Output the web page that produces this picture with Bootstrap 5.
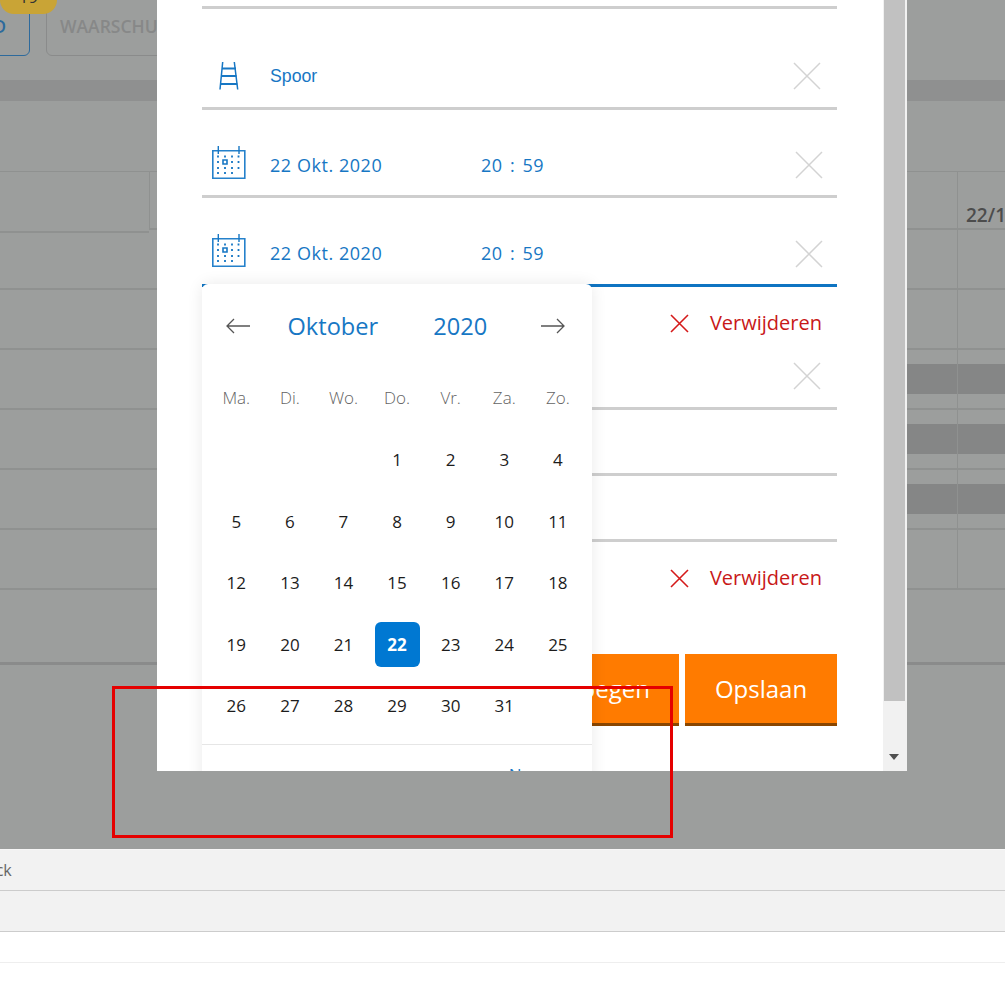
<!DOCTYPE html>
<html lang="nl">
<head>
<meta charset="utf-8">
<title>Datum kiezen</title>
<link href="https://cdn.jsdelivr.net/npm/bootstrap@5.3.0/dist/css/bootstrap.min.css" rel="stylesheet">
<style>
html,body{margin:0;height:985px;overflow:hidden;background:#fff;font-family:"Open Sans",sans-serif}
.stage{position:relative;width:1005px;height:985px;overflow:hidden}
.backdrop{height:849px;background:#9c9e9d;overflow:hidden}
.tabs{height:56px;margin-left:-90px;gap:16px;position:relative}
.tab-a,.tab-b{height:86px;margin-top:-30px;border:1px solid #8a8b8b;border-radius:6px;font-size:17.5px;font-weight:600;color:#878888;padding:42px 14px 0}
.tab-a{width:120px;border-color:#2d6a9c;color:#2d6a9c;text-align:right;padding-right:23px}
.tab-b{width:300px}
.tab-b span{margin-left:-1px}
.count{position:absolute;left:90px;top:-14px;width:57px;height:28px;border-radius:0 0 14px 14px;background:#c9a436;color:#333;font-size:17px;text-align:center;padding-top:2px;line-height:18px}
.strip{height:21px;margin-top:24px;background:#8f9090}
.thead{height:59px;margin-top:70px;border-top:1px solid #8f9190}
.tc1{width:157px;flex:none}
.thead .tc1{width:149px;height:61px;border-bottom:2px solid #8f9190}
.tc2{flex:1 1 auto;border-left:1px solid #8f9190}
.thead .tc2,.thead .tc3{border-bottom:2px solid #8f9190}
.tc3{width:48px;flex:none;border-left:1px solid #8f9190;font-size:19px;font-weight:600;color:#4c4c4c;padding:29px 0 0 8px;white-space:nowrap;overflow:hidden}
.trow{height:60px;border-bottom:2px solid #8f9190}
.trow .tc2{border-left:0}
.trow .tc3{padding:0}
.shade{height:30px;margin-top:14px;background:#858686}
.rule{height:3px;margin-top:72px;background:#8a8b8b}
.foot1{height:42px;background:#f2f2f2;border-top:1px solid #f7f7f7;border-bottom:1px solid #ccc;color:#666;font-size:16px;line-height:41px;white-space:nowrap}
.foot2{height:41px;background:#f2f2f2;border-bottom:1px solid #ccc}
.foot1 span{margin-left:-59px}
.foot3{height:31px;border-bottom:1px solid #eee}
.dialog{position:absolute;left:157px;top:0;width:750px;height:771px;background:#fff;overflow:hidden}
.form-area{width:726px;padding-left:45px;position:relative}
.fld{width:635px;box-sizing:border-box;border-bottom:3px solid #cecece}
.fld-blue{border-bottom-color:#0f74c2}
.ico-box{width:54px;margin-right:14px;flex:none}
.val{color:#1777c4;font-size:18px;letter-spacing:.55px;white-space:nowrap}
.val-rail{font-family:"Liberation Sans",sans-serif;font-size:17.7px;letter-spacing:0}
.val-date{width:211px}
.val-time{word-spacing:2px}
.remove{color:#c81818;font-size:20px;gap:21px;padding-right:15px}
.cta{width:152px;height:72px;border:0;border-bottom:3px solid #8a4600;border-radius:0;background:#ff7b00;color:#fff;font-size:24px;padding:0}
.cta:hover{background:#ff7b00;color:#fff}
.cta-wide{width:240px;text-align:right;padding-right:29px}
.sbar{width:24px;flex:none;background:#f1f1f1}
.sthumb{height:701px;margin-left:1px;width:21px;background:#c1c1c1}
.sarrow{width:0;height:0;margin:53px 0 0 6px;border-left:5px solid transparent;border-right:5px solid transparent;border-top:6px solid #505050}
.picker{position:absolute;left:45px;top:284px;width:390px;height:520px;background:#fff;border:0;border-radius:6px;box-shadow:0 0 16px rgba(0,0,0,.09);padding:12px 8px 0 7.5px}
.pick-head{height:60px;padding:0 19px 0 16px}
.pick-title{color:#1777c4;font-size:23.6px;padding-top:1px}
.wk,.days{display:grid;grid-template-columns:repeat(7,53.6px);text-align:center}
.wk{height:40px;margin-top:22px;line-height:40px;color:#636363;font-weight:300;font-size:17px}
.days{margin-top:11px;grid-auto-rows:61.5px;font-size:17px;color:#1c1c1c}
.days>div{display:flex;align-items:center;justify-content:center}
.today{width:45px;height:45px;background:#0078d2;color:#fff;font-weight:700;border-radius:6px;display:flex;align-items:center;justify-content:center}
.pick-foot{margin:7.5px -8px 0 -7.5px;border-top:1px solid #e6e6e6;padding:17px 60px 0 0;text-align:right;color:#1777c4;font-size:17px}
.marker{position:absolute;left:112px;top:686px;width:561px;height:152px;border:3px solid #e50000}
</style>
</head>
<body>
<div class="stage">
  <div class="backdrop">
    <div class="tabs d-flex">
      <div class="tab-a">ADVIES D</div>
      <div class="tab-b"><span>WAARSCHUWING</span></div>
      <div class="count">19</div>
    </div>
    <div class="strip"></div>
    <div class="thead d-flex">
      <div class="tc1"></div><div class="tc2"></div><div class="tc3">22/10</div>
    </div>
    <div class="trow d-flex"><div class="tc1"></div><div class="tc2"></div><div class="tc3"></div></div>
    <div class="trow d-flex"><div class="tc1"></div><div class="tc2"></div><div class="tc3"></div></div>
    <div class="trow d-flex"><div class="tc1"></div><div class="tc2"><div class="shade"></div></div><div class="tc3"><div class="shade"></div></div></div>
    <div class="trow d-flex"><div class="tc1"></div><div class="tc2"><div class="shade"></div></div><div class="tc3"><div class="shade"></div></div></div>
    <div class="trow d-flex"><div class="tc1"></div><div class="tc2"><div class="shade"></div></div><div class="tc3"><div class="shade"></div></div></div>
    <div class="trow d-flex"><div class="tc1"></div><div class="tc2"></div><div class="tc3"></div></div>
    <div class="rule"></div>
  </div>
  <div class="foot1"><span>Feedback</span></div>
  <div class="foot2"></div>
  <div class="foot3"></div>

  <div class="dialog d-flex">
    <div class="form-area flex-grow-1">
      <div class="fld" style="height:9px"></div>

      <div class="fld d-flex align-items-center" style="height:101px;padding-top:36px">
        <div class="ico-box d-flex justify-content-center">
          <svg width="22" height="28" viewBox="0 0 22 28" fill="none" stroke="#1777c4"><path stroke-width="1.5" d="M4.7 0 2 27.5M16.3 0l3.4 27.5"/><path stroke-width="1.8" d="M4 6.5h14M3.5 14h15M2.7 22h16.6"/></svg>
        </div>
        <span class="val val-rail">Spoor</span>
        <svg class="ms-auto" style="margin-right:16px" width="28" height="28" viewBox="0 0 28 28" fill="none" stroke="#d3d3d3" stroke-width="1.5"><path d="M1 1l26 26M27 1 1 27"/></svg>
      </div>

      <div class="fld d-flex align-items-center" style="height:88px;padding-top:25px">
        <div class="ico-box d-flex justify-content-center">
          <svg style="margin-top:-5px" width="34" height="33" viewBox="0 0 34 33" fill="none"><use href="#cal"/></svg>
        </div>
        <span class="val val-date">22 Okt. 2020</span>
        <span class="val val-time">20 : 59</span>
        <svg class="ms-auto" style="margin-right:14px" width="28" height="28" viewBox="0 0 28 28" fill="none" stroke="#d3d3d3" stroke-width="1.5"><path d="M1 1l26 26M27 1 1 27"/></svg>
      </div>

      <div class="fld fld-blue d-flex align-items-center" style="height:89px;padding-top:24px">
        <div class="ico-box d-flex justify-content-center">
          <svg style="margin-top:-5px" width="34" height="33" viewBox="0 0 34 33" fill="none"><use href="#cal"/></svg>
        </div>
        <span class="val val-date">22 Okt. 2020</span>
        <span class="val val-time">20 : 59</span>
        <svg class="ms-auto" style="margin-right:14px;margin-top:2px" width="28" height="28" viewBox="0 0 28 28" fill="none" stroke="#d3d3d3" stroke-width="1.5"><path d="M1 1l26 26M27 1 1 27"/></svg>
      </div>

      <div class="remove d-flex align-items-center justify-content-end" style="width:635px;height:72px">
        <svg width="19" height="19" viewBox="0 0 19 19" fill="none" stroke="#d51a1a" stroke-width="1.6"><path d="M1 1l17 17M18 1 1 18"/></svg>
        <span>Verwijderen</span>
      </div>

      <div class="fld d-flex align-items-center justify-content-end" style="height:51px;padding-bottom:14px">
        <svg style="margin-right:16px" width="28" height="28" viewBox="0 0 28 28" fill="none" stroke="#d3d3d3" stroke-width="1.5"><path d="M1 1l26 26M27 1 1 27"/></svg>
      </div>
      <div class="fld" style="height:66px"></div>
      <div class="fld" style="height:66px"></div>

      <div class="remove d-flex align-items-center justify-content-end" style="width:635px;height:72px">
        <svg width="19" height="19" viewBox="0 0 19 19" fill="none" stroke="#d51a1a" stroke-width="1.6"><path d="M1 1l17 17M18 1 1 18"/></svg>
        <span>Verwijderen</span>
      </div>

      <div class="d-flex justify-content-end" style="width:635px;margin-top:40px;gap:6px">
        <button type="button" class="btn cta cta-wide">Toevoegen</button>
        <button type="button" class="btn cta">Opslaan</button>
      </div>

      <div class="card picker">
        <div class="pick-head d-flex align-items-center">
          <svg width="24" height="16" viewBox="0 0 24 16" fill="none" stroke="#555" stroke-width="1.3"><path d="M24 8H1M8 1 1 8l7 7"/></svg>
          <span class="pick-title" style="margin-left:38px">Oktober</span>
          <span class="pick-title" style="margin-left:55px">2020</span>
          <svg class="ms-auto" width="24" height="16" viewBox="0 0 24 16" fill="none" stroke="#555" stroke-width="1.3"><path d="M0 8h23M16 1l7 7-7 7"/></svg>
        </div>
        <div class="wk"><div>Ma.</div><div>Di.</div><div>Wo.</div><div>Do.</div><div>Vr.</div><div>Za.</div><div>Zo.</div></div>
        <div class="days">
          <div></div><div></div><div></div><div>1</div><div>2</div><div>3</div><div>4</div>
          <div>5</div><div>6</div><div>7</div><div>8</div><div>9</div><div>10</div><div>11</div>
          <div>12</div><div>13</div><div>14</div><div>15</div><div>16</div><div>17</div><div>18</div>
          <div>19</div><div>20</div><div>21</div><div><span class="today">22</span></div><div>23</div><div>24</div><div>25</div>
          <div>26</div><div>27</div><div>28</div><div>29</div><div>30</div><div>31</div><div></div>
        </div>
        <div class="pick-foot">Nu</div>
      </div>
    </div>
    <div class="sbar">
      <div class="sthumb"></div>
      <div class="sarrow"></div>
    </div>
  </div>

  <div class="marker"></div>

  <svg width="0" height="0" class="position-absolute">
    <defs>
      <g id="cal">
        <path d="M.8 4.8h32v27.4H.8z" stroke="#2581cb" stroke-width="1.6"/>
        <path d="M6.3 0v8M27 0v8" stroke="#1777c4" stroke-width="1.4"/>
        <path d="M6 10.5h.01M13 10.5h.01M20 10.5h.01M26.5 10.5h.01M6 16h.01M20 16h.01M26.5 16h.01M6 22h.01M13 22h.01M20 22h.01M26.5 22h.01M6 27h.01M13 27h.01M20 27h.01" stroke="#1777c4" stroke-width="1.8" stroke-linecap="square"/>
        <path d="M11 14h4v4h-4z" stroke="#1777c4" stroke-width="1.6"/>
      </g>
    </defs>
  </svg>
</div>
<script src="https://cdn.jsdelivr.net/npm/bootstrap@5.3.0/dist/js/bootstrap.bundle.min.js"></script>
</body>
</html>
